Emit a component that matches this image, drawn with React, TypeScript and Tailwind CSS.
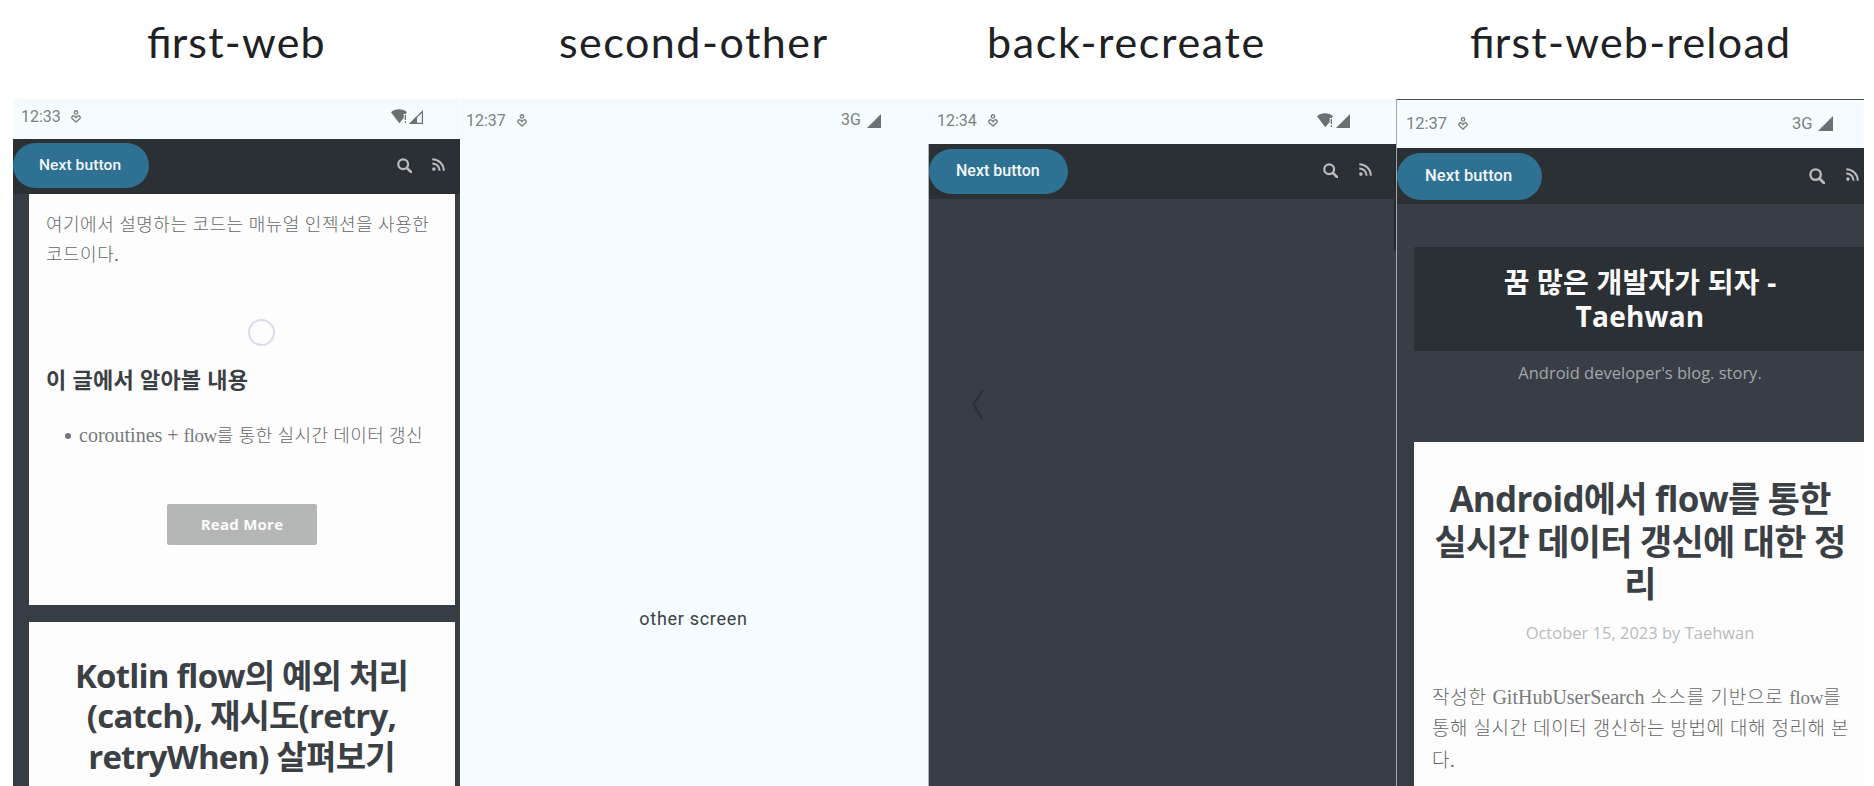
import React from "react";

const Person = ({ className }: { className: string }) => (
  <svg viewBox="0 0 10 13" className={className} fill="none" stroke="#7c8081" strokeWidth="1.4">
    <circle cx="5" cy="2.4" r="1.7" />
    <path d="M5 12 1.300 8.700C.1 7.200 1.300 5.500 3 5.900c1 .2 1.500.9 2 1.600.5-.7 1-1.400 2-1.600 1.700-.4 2.900 1.300 1.700 2.800Z" />
  </svg>
);

const Wifi = ({ className }: { className: string }) => (
  <svg viewBox="0 0 16 15" className={className} fill="#6c7071">
    <path d="M0 3.200C4.500-.6 11.500-.6 16 3.200L14.500 5H12.700V9L8.300 14.200Z" />
    <path d="M13.700 6h1.300v5h-1.300zM13.700 12.300h1.300v1.600h-1.300z" />
  </svg>
);

const Signal = ({ className, weak }: { className: string; weak?: boolean }) => (
  <svg viewBox="0 0 14 14" className={className} fill="#6c7071">
    {weak ? (
      <>
        <path d="M0 14 8 6v8Z" />
        <path d="M1.500 13.400 13.400 1.500v11.900Z" fill="none" stroke="#6c7071" strokeWidth="1.200" />
      </>
    ) : (
      <path d="M0 14 14 0v14Z" />
    )}
  </svg>
);

const Search = ({ className }: { className: string }) => (
  <svg viewBox="0 0 15 15" className={className} fill="none" stroke="#b9bbbc">
    <circle cx="6.200" cy="6.200" r="4.900" strokeWidth="2.200" />
    <path d="m9.800 9.800 4.200 4.200" strokeWidth="2.600" strokeLinecap="round" />
  </svg>
);

const Rss = ({ className }: { className: string }) => (
  <svg viewBox="0 0 13 13" className={className} fill="none" stroke="#b9bbbc" strokeWidth="2">
    <circle cx="1.900" cy="11.100" r="1.800" fill="#b9bbbc" stroke="none" />
    <path d="M.3 5.400a7.300 7.300 0 0 1 7.300 7.300M.3 1.200A11.500 11.500 0 0 1 11.800 12.700" />
  </svg>
);

const L = ({ className = "", children }: { className?: string; children: React.ReactNode }) => (
  <div className={"whitespace-nowrap " + className}>{children}</div>
);

const Latin = ({ className = "text-[20px] tracking-normal", children }: { className?: string; children: React.ReactNode }) => (
  <span className={"text-[#77797b] " + className}>{children}</span>
);

export default function App() {
  const title = "font-['Lato',sans-serif] text-[43px] leading-[52px] text-[#202124]";
  const bold = "font-['Open_Sans','Noto_Sans_CJK_KR',sans-serif] font-bold text-[#3b4045]";
  const body = "font-['Liberation_Serif','Noto_Sans_CJK_KR',serif] font-light text-[#66686a]";
  const kotlin = bold + " pr-[1px] text-[33px] leading-[40.3px] tracking-[-0.8px]";
  const android = bold + " pl-[2px] text-[35px] leading-[42.5px] tracking-[-0.75px]";
  const blog = "pl-[2px] font-['Open_Sans','Noto_Sans_CJK_KR',sans-serif] text-[28px] font-bold leading-[34px] tracking-[0.2px] text-[#fafafa]";
  const status = "flex items-start font-['Roboto',sans-serif] text-[#7c8081]";
  const next = "rounded-full bg-[#2f7192] font-['Roboto',sans-serif] font-medium leading-[20px] text-[#f2f7f9]";
  return (
    <div className="h-[786px] w-[1874px] overflow-hidden bg-white">
      <header className="flex h-[99px] pt-[16px]">
        <L className={title + " w-[461px] pl-[147px] tracking-[1.2px]"}><span className="tracking-normal">fi</span>rst-web</L>
        <L className={title + " w-[468px] pl-[98px] tracking-[1.5px]"}>second-other</L>
        <L className={title + " w-[468px] pl-[58px] tracking-[1.65px]"}>back-recreate</L>
        <L className={title + " pl-[73px] tracking-[1.25px]"}><span className="tracking-normal">fi</span>rst-web-reload</L>
      </header>
      <main className="flex h-[687px] pl-[13px]">
        <section className="mr-px flex w-[447px] flex-col bg-[#373d44]">
          <div className={status + " h-[40px] bg-[#f4fcff] pl-[8px] pt-[9px] text-[16px]"}>
            <L className="w-[50px] leading-[18px]">12:33</L>
            <Person className="mt-[2px] h-[13px] w-[10px]" />
            <Wifi className="ml-[310px] mt-px h-[15px] w-[16px]" />
            <Signal weak className="ml-[2px] mt-[2px] h-[14px] w-[14px]" />
          </div>
          <div className="flex h-[55px] items-start bg-[#2a3033] pt-[4px]">
            <div className={next + " h-[45px] w-[136px] pl-[26px] pt-[12px] text-[15.5px] tracking-[0.1px]"}><L>Next button</L></div>
            <Search className="ml-[248px] mt-[15px] h-[15px] w-[15px]" />
            <Rss className="ml-[20px] mt-[15px] h-[13px] w-[13px]" />
          </div>
          <article className="ml-[16px] mr-[5px] h-[411px] bg-[#fdfdfd] pt-[16px]">
            <L className={body + " pl-[17px] text-[18px] leading-[30px] tracking-[0.5px]"}>여기에서 설명하는 코드는 매뉴얼 인젝션을 사용한</L>
            <L className={body + " pl-[17px] text-[18px] leading-[30px] tracking-[0.5px]"}>코드이다.</L>
            <div className="ml-[219px] mt-[49px] size-[27px] rounded-full border-2 border-[#dedaea]" />
            <L className={bold + " mt-[18px] pl-[17px] text-[22px] leading-[30px] tracking-[0.25px]"}>이 글에서 알아볼 내용</L>
            <div className="mt-[26px] flex items-center pl-[36px]">
              <div className="mr-[8px] size-[6px] rounded-full bg-[#747678]" />
              <L className={body + " text-[18px] leading-[30px] tracking-[0.4px]"}><Latin>coroutines + </Latin><Latin className="text-[19px] tracking-[-0.4px]">flow</Latin>를 통한 실시간 데이터 갱신</L>
            </div>
            <div className="ml-[138px] mt-[53px] h-[41px] w-[150px] rounded-[2px] bg-[#b5b7b6] pt-[9px] font-['Open_Sans',sans-serif] text-[15px] font-bold leading-[22px] tracking-[0.25px] text-[#fcfcfc]"><L className="text-center">Read More</L></div>
          </article>
          <article className="ml-[16px] mr-[5px] mt-[17px] flex-1 bg-[#fdfdfd] pt-[34px] text-center">
            <L className={kotlin}>Kotlin flow의 예외 처리</L>
            <L className={kotlin}>(catch), 재시도(retry,</L>
            <L className={kotlin}>retryWhen) 살펴보기</L>
          </article>
        </section>
        <section className="w-[467px] bg-[#f4fcff]">
          <div className={status + " h-[45px] pl-[5px] pt-[12px] text-[16px]"}>
            <L className="w-[51px] leading-[19px]">12:37</L>
            <Person className="mt-[3px] h-[13px] w-[10px]" />
            <L className="ml-[314px] w-[26px] leading-[18px]">3G</L>
            <Signal className="mt-[3px] h-[14px] w-[14px]" />
          </div>
          <L className="mt-[461px] pr-[2px] text-center font-['Roboto',sans-serif] text-[18px] leading-[28px] tracking-[0.7px] text-[#3c4043]">other screen</L>
        </section>
        <section className="relative flex w-[468px] flex-col bg-[#383e45]">
          <div className={status + " h-[45px] bg-[#f4fcff] pl-[9px] pt-[13px] text-[16px]"}>
            <L className="w-[51px] leading-[18px]">12:34</L>
            <Person className="mt-[2px] h-[13px] w-[10px]" />
            <Wifi className="ml-[319px] mt-px h-[15px] w-[16px]" />
            <Signal className="ml-[3px] mt-[2px] h-[14px] w-[14px]" />
          </div>
          <div className="flex h-[55px] items-start border-l border-[#a9b2b5] bg-[#2a3033] pt-[5px]">
            <div className={next + " h-[45px] w-[139px] pl-[27px] pt-[12px] text-[16px]"}><L>Next button</L></div>
            <Search className="ml-[255px] mt-[14px] h-[15px] w-[15px]" />
            <Rss className="ml-[21px] mt-[14px] h-[13px] w-[13px]" />
          </div>
          <div className="flex-1 border-l border-[#a9b2b5] pl-[43px] pt-[190px]">
            <svg viewBox="0 0 12 32" className="h-[32px] w-[12px]" fill="none" stroke="#2c3137" strokeWidth="2.200"><path d="M10.500 1.500 1.500 15.500 10.500 30.500" /></svg>
          </div>
          <div className="absolute right-0 top-[45px] h-[107px] w-[2px] bg-[#262b2e]" />
        </section>
        <section className="flex w-[468px] flex-col border-l border-[#a5a8aa] bg-[#383e45]">
          <div className={status + " h-[49px] border-t border-[#4b4d4e] bg-[#f4fcff] pl-[9px] pt-[14px] text-[16.5px]"}>
            <L className="w-[52px] leading-[20px]">12:37</L>
            <Person className="mt-[3px] h-[13px] w-[10px]" />
            <L className="ml-[324px] w-[26px] leading-[19px]">3G</L>
            <Signal className="mt-[2px] h-[15px] w-[15px]" />
          </div>
          <div className="flex h-[56px] items-start bg-[#2a3033] pt-[5px]">
            <div className={next + " h-[47px] w-[145px] pl-[28px] pt-[13px] text-[16.5px] tracking-[0.1px]"}><L>Next button</L></div>
            <Search className="ml-[267px] mt-[15px] h-[16px] w-[16px]" />
            <Rss className="ml-[21px] mt-[15px] h-[13px] w-[13px]" />
          </div>
          <div className="ml-[17px] mt-[43px] h-[104px] bg-[#2a3034] pt-[18px] text-center">
            <L className={blog}>꿈 많은 개발자가 되자 -</L>
            <L className={blog}>Taehwan</L>
          </div>
          <L className="ml-[17px] mt-[10px] pl-[2px] text-center font-['Open_Sans',sans-serif] text-[16.5px] leading-[24px] text-[#a3a6a9]">Android developer's blog. story.</L>
          <article className="ml-[17px] mt-[57px] flex-1 bg-[#fdfdfd] pt-[36px] text-center">
            <L className={android}>Android에서 flow를 통한</L>
            <L className={android}>실시간 데이터 갱신에 대한 정</L>
            <L className={android}>리</L>
            <L className="mt-[15px] pl-[2px] font-['Open_Sans',sans-serif] text-[16.5px] leading-[24px] text-[#b9bbbc]">October 15, 2023 by Taehwan</L>
            <L className={body + " mt-[37px] pl-[18px] text-left text-[19px] leading-[31.5px] tracking-[0.8px]"}>작성한 <Latin>GitHubUserSearch</Latin> 소스를 기반으로 <Latin className="text-[19px] tracking-[-0.2px]">flow</Latin>를</L>
            <L className={body + " pl-[18px] text-left text-[19px] leading-[31.5px] tracking-[0.6px]"}>통해 실시간 데이터 갱신하는 방법에 대해 정리해 본</L>
            <L className={body + " pl-[18px] text-left text-[19px] leading-[31.5px] tracking-[0.6px]"}>다.</L>
          </article>
        </section>
      </main>
    </div>
  );
}
